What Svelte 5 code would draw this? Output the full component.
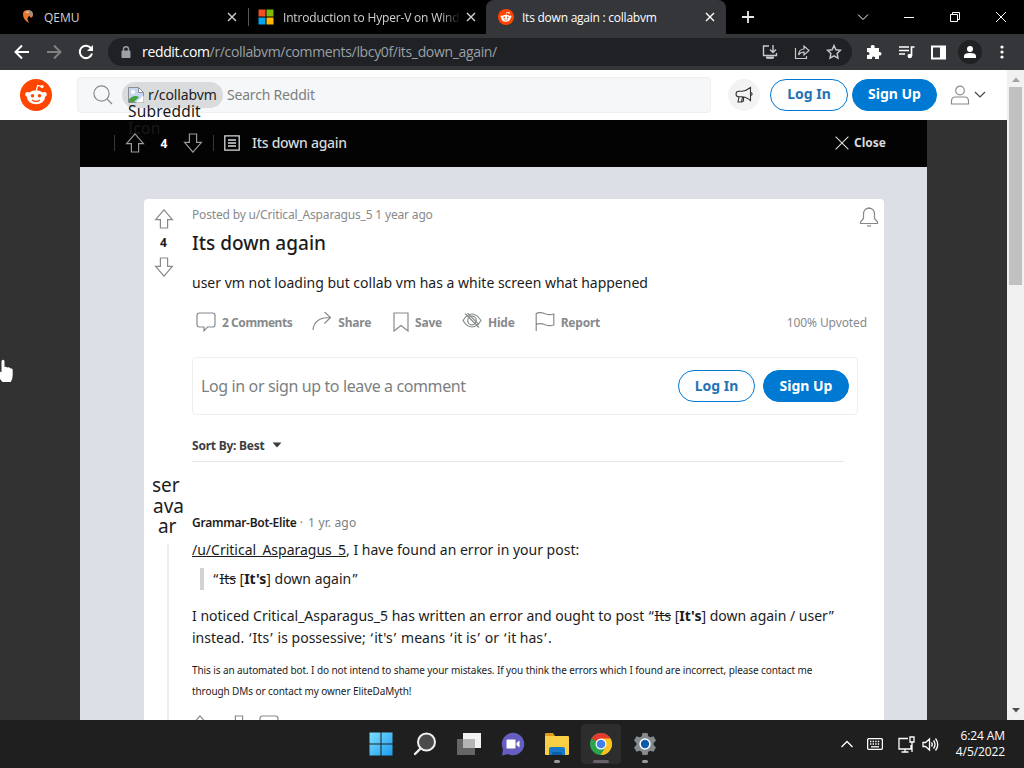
<script>

    let tabs = [
        { id: "qemu", title: "QEMU" },
        { id: "ms", title: "Introduction to Hyper-V on Wind" },
        { id: "reddit", title: "Its down again : collabvm" }
    ];

    let active =
        $state("reddit");

    let actions = [
        { icon: "talk", label: "2 Comments" },
        { icon: "share", label: "Share" },
        { icon: "save", label: "Save" },
        { icon: "hide", label: "Hide" },
        { icon: "report", label: "Report" }
    ];

</script>

{#snippet snoo(size)}
    <svg width={size} height={size} viewBox="0 0 32 32">
        <circle cx="16" cy="16" r="16" fill="#ff4500" />
        <path d="M16.3 11.5l1.4-5 4.2 1" fill="none" stroke="#fff" stroke-width="1.2" />
        <circle cx="22" cy="7.6" r="1.7" fill="#fff" />
        <circle cx="7.6" cy="15.4" r="2.4" fill="#fff" />
        <circle cx="24.4" cy="15.4" r="2.4" fill="#fff" />
        <ellipse cx="16" cy="18.3" rx="9" ry="7" fill="#fff" />
        <circle cx="12.5" cy="16.8" r="1.7" fill="#ff4500" />
        <circle cx="19.5" cy="16.8" r="1.7" fill="#ff4500" />
        <path d="M12 21q4 2.8 8 0" fill="none" stroke="#ff4500" stroke-width="1.2" />
    </svg>
{/snippet}

{#snippet up()}
    <svg class="line" width="20" height="20" viewBox="0 0 20 20">
        <path d="M10 .8 18.4 10.6H13.6V19H6.4V10.6H1.6Z" />
    </svg>
{/snippet}

{#snippet down()}
    <svg class="line" width="20" height="20" viewBox="0 0 20 20">
        <path d="M10 19.2 18.4 9.4H13.6V1H6.4V9.4H1.6Z" />
    </svg>
{/snippet}

{#snippet cross(size)}
    <svg width={size} height={size} viewBox="0 0 10 10">
        <path d="M1 1l8 8M9 1l-8 8" fill="none" stroke="currentColor" stroke-width="1.4" />
    </svg>
{/snippet}

<div class="screen">

    <div class="tabs">

        {#each tabs as tab}

            <div
                class="tab {tab.id}"
                class:active={active === tab.id}
            >

                {#if tab.id === "qemu"}
                    <svg width="16" height="16" viewBox="0 0 16 16">
                        <path d="M3 5Q3 1 8 1q5 .5 5 5 0 2-2 3L9.500 7 8 8q-1 2 0 3.500l1 2.500Q3 11 3 5Z" fill="#e87830" />
                        <path d="M8 1q5 .5 5 5l-1.500 1.500-2.500-2Z" fill="#9b9283" />
                        <path d="M5 4l3-2 1 1.500Z" fill="#ffe0c0" />
                    </svg>
                {:else if tab.id === "ms"}
                    <svg width="16" height="16" viewBox="0 0 16 16">
                        <path d="M.5.5h7v7h-7z" fill="#f25022" />
                        <path d="M8.500.5h7v7h-7z" fill="#7fba00" />
                        <path d="M.5 8.500h7v7h-7z" fill="#00a4ef" />
                        <path d="M8.500 8.500h7v7h-7z" fill="#ffb900" />
                    </svg>
                {:else}
                    {@render snoo(16)}
                {/if}

                <span class="tab-title">{tab.title}</span>

                {@render cross(10)}

            </div>

        {/each}

        <svg class="plus" width="14" height="14" viewBox="0 0 14 14">
            <path d="M7 1v12M1 7h12" fill="none" stroke="#e8e8e8" stroke-width="1.8" />
        </svg>

        <div class="win">
            <svg width="12" height="12" viewBox="0 0 12 12"><path d="M1 3.500l5 5 5-5" /></svg>
            <svg width="12" height="12" viewBox="0 0 12 12"><path d="M1 6.500h10" /></svg>
            <svg width="12" height="12" viewBox="0 0 12 12"><path d="M1.500 3.500h7v7h-7zM3.500 3.500v-2h7v7h-2" /></svg>
            <svg width="12" height="12" viewBox="0 0 12 12"><path d="M1 1l10 10M11 1L1 11" /></svg>
        </div>

    </div>

    <div class="toolbar">

        <svg class="nav" width="16" height="16" viewBox="0 0 16 16"><path d="M15 8H2M8 1.500L1.500 8 8 14.500" /></svg>
        <svg class="nav dim" width="16" height="16" viewBox="0 0 16 16"><path d="M1 8h13M8 1.500L14.500 8 8 14.500" /></svg>
        <svg class="nav" width="16" height="16" viewBox="0 0 16 16">
            <path d="M13.200 4.500A6.200 6.200 0 1 0 14 9.500" />
            <path d="M15 1v6H9Z" fill="#fff" stroke="none" />
        </svg>

        <div class="omnibox">

            <svg width="10" height="12" viewBox="0 0 10 12">
                <path d="M1 5h8v6.500H1z" fill="#9aa0a6" stroke="#9aa0a6" />
                <path d="M2.500 5V3q0-2.200 2.500-2.200T7.500 3v2" fill="none" stroke="#9aa0a6" stroke-width="1.400" />
            </svg>

            <div class="url"><b>reddit.com</b>/r/collabvm/comments/lbcy0f/its_down_again/</div>

            <svg class="tool" width="16" height="16" viewBox="0 0 16 16">
                <path d="M7 2H1.500v9.500h13V9M5 14h6M11 1v7M8 5.500l3 3 3-3" />
                <path d="M4 12.500h8v2H4z" fill="#c7c9cc" stroke="none" />
            </svg>
            <svg class="tool" width="16" height="16" viewBox="0 0 16 16">
                <path d="M1.500 4v10.500h11V12M4.500 11q.5-6 5.500-6V2l5 4.500-5 4.500V8q-3.500 0-5.500 3Z" stroke-width="1.200" />
            </svg>
            <svg class="tool" width="16" height="16" viewBox="0 0 16 16">
                <path d="M8 1.500l1.900 4.300 4.600.5-3.400 3.200.9 4.700L8 11.800l-4 2.400.9-4.700L1.500 6.300l4.600-.5Z" />
            </svg>

        </div>

        <svg class="ext" width="16" height="16" viewBox="0 0 16 16">
            <path d="M1 4h4q-1-3 1.700-3T8.500 4H13v4q2.500-.5 2.500 1.700T13 11.500V15H9q.5-2.500-1.500-2.500T6 15H1v-4q2.500.5 2.500-1.500T1 8Z" fill="#fff" />
        </svg>
        <svg class="ext" width="17" height="16" viewBox="0 0 17 16">
            <path d="M1 3h10M1 6.500h10M1 10h6M13.500 12V3h3" fill="none" stroke="#fff" stroke-width="1.700" />
            <circle cx="11.800" cy="12" r="2.300" fill="#fff" />
        </svg>
        <svg class="ext" width="15" height="15" viewBox="0 0 15 15">
            <path d="M1 1.500h13v12H1z" fill="none" stroke="#fff" stroke-width="2" />
            <path d="M9 1h5v13H9z" fill="#fff" />
        </svg>
        <div class="profile">
            <svg width="14" height="14" viewBox="0 0 14 14">
                <circle cx="7" cy="4" r="3" fill="#fff" />
                <path d="M1 13v-2q0-3 6-3t6 3v2Z" fill="#fff" />
            </svg>
        </div>
        <svg class="dots" width="4" height="16" viewBox="0 0 4 16">
            <circle cx="2" cy="3" r="1.600" /><circle cx="2" cy="8" r="1.600" /><circle cx="2" cy="13" r="1.600" />
        </svg>

    </div>

    <div class="view">

        <div class="page">

            <div class="header">

                <div class="logo">{@render snoo(32)}</div>

                <div class="search">

                    <svg width="20" height="20" viewBox="0 0 20 20">
                        <circle cx="8.500" cy="8.500" r="7.600" fill="none" stroke="#878a8c" stroke-width="1.200" />
                        <path d="M14 14l5 5" stroke="#878a8c" stroke-width="1.200" />
                    </svg>

                    <div class="pill">
                        <svg width="16" height="16" viewBox="0 0 16 16">
                            <path d="M.5.5h10l5 5v10H.5z" fill="#c6d8f2" stroke="#8c8f93" />
                            <path d="M10.500.5v5h5z" fill="#fff" stroke="#8c8f93" />
                            <path d="M1 15v-3q5-5 10-2L6 15Z" fill="#44a340" />
                            <path d="M8 15.500l7.500-7v7Z" fill="#fff" />
                            <circle cx="5" cy="5" r="2" fill="#fff" />
                        </svg>
                        <span>r/collabvm</span>
                        <div class="alt">Subreddit<br />Icon</div>
                    </div>

                    <span class="placeholder">Search Reddit</span>

                </div>

                <div class="horn">
                    <svg width="20" height="20" viewBox="0 0 20 20">
                        <path d="M8 6.200Q12 6 16.500 2.500v13Q12 11.800 8 11.800H5Q2 11.800 2 9t3-2.800ZM5 12l-1 5h3.500l1-5M9.500 12.500v3.500l-2 1M16.500 7.500q1.600 0 1.600 1.500t-1.600 1.500" />
                    </svg>
                </div>

                <button class="btn ghost">Log In</button>
                <button class="btn">Sign Up</button>

                <svg class="user" width="20" height="20" viewBox="0 0 20 20">
                    <circle cx="10" cy="5.500" r="4.300" />
                    <path d="M1.500 19v-3q0-4 4-4h9q4 0 4 4v3Z" />
                </svg>
                <svg class="chev" width="12" height="8" viewBox="0 0 12 8"><path d="M1 1l5 5 5-5" /></svg>

            </div>

            <div class="modal">

                <div class="bar">
                    <i></i>
                    {@render up()}
                    <b class="count">4</b>
                    {@render down()}
                    <i class="second"></i>
                    <svg class="doc" width="16" height="16" viewBox="0 0 16 16">
                        <path d="M.8.8h14.400v14.400H.8zM4 5h8M4 8h8M4 11h8" />
                    </svg>
                    <span class="bar-title">Its down again</span>
                    <div class="close">
                        {@render cross(16)}
                        <span>Close</span>
                    </div>
                </div>

                <div class="card">

                    <div class="votes">
                        {@render up()}
                        <b>4</b>
                        {@render down()}
                    </div>

                    <div class="post">

                        <div class="meta">
                            <span>Posted by u/Critical_Asparagus_5 1 year ago</span>
                            <svg class="line bell" width="20" height="20" viewBox="0 0 20 20">
                                <path d="M10 1.200q5.500.4 5.500 6.300v4l3 3.500v1.500h-17V15l3-3.500v-4Q4.500 1.600 10 1.200ZM10 0v1.200M8 18.500q2 1.400 4 0" />
                            </svg>
                        </div>

                        <h1>Its down again</h1>

                        <p class="text">user vm not loading but collab vm has a white screen what happened</p>

                        <div class="actions">

                            {#each actions as a}

                                <div class="action {a.icon}">
                                    <svg class="line" width="20" height="20" viewBox="0 0 20 20">
                                        {#if a.icon === "talk"}
                                            <path d="M3.500 1h13Q19 1 19 3.500v9q0 2.500-2.500 2.500h-5L8 18.800V15H3.500Q1 15 1 12.500v-9Q1 1 3.500 1Z" />
                                        {:else if a.icon === "share"}
                                            <path d="M1 18Q2 5.500 18 5.500M12.500 0l6 5.500-6 6" />
                                        {:else if a.icon === "save"}
                                            <path d="M3 1h14v18l-7-5.500L3 19Z" />
                                        {:else if a.icon === "hide"}
                                            <path d="M1 8.500Q5 2 10 2t9 6.500Q15 15 10 15T1 8.500Z" />
                                            <circle cx="10" cy="8.500" r="4.300" />
                                            <path d="M3 1.500l14 14M5.500 1.200l11.500 11.500" />
                                        {:else}
                                            <path d="M1.200 19V1.500q4-2 9 .3 4 1.700 8.600.2v11q-4.600 1.500-8.600-.2-5-2.300-9-.3" />
                                        {/if}
                                    </svg>
                                    {a.label}
                                </div>

                            {/each}

                            <span class="upvoted">100% Upvoted</span>

                        </div>

                        <div class="join">
                            <span>Log in or sign up to leave a comment</span>
                            <button class="btn ghost">Log In</button>
                            <button class="btn">Sign Up</button>
                        </div>

                        <div class="sort">
                            Sort By: Best
                            <svg width="10" height="6" viewBox="0 0 10 6"><path d="M.5.500h9L5 5.500Z" fill="#3c3d3f" /></svg>
                        </div>

                    </div>

                    <div class="side">
                        <div class="avatar">ser<br />ava<br />&nbsp;ar</div>
                        <div class="thread"></div>
                    </div>

                    <div class="comment">

                        <div class="author"><b>Grammar-Bot-Elite</b> · <span>1 yr. ago</span></div>

                        <p class="hello"><u>/u/Critical_Asparagus_5</u>, I have found an error in your post:</p>

                        <blockquote><i>“</i><s>Its</s> [<b>It's</b>] down again<i>”</i></blockquote>

                        <p class="body">
                            I noticed Critical_Asparagus_5 has written an error and ought to post <i>“</i><s>Its</s> [<b>It's</b>] down again / user<i>”</i><br />
                            <span>instead. <i>‘</i>Its<i>’</i> is possessive; <i>‘</i>it's<i>’</i> means <i>‘</i>it is<i>’</i> or <i>‘</i>it has<i>’</i>.</span>
                        </p>

                        <p class="small">
                            This is an automated bot. I do not intend to shame your mistakes. If you think the errors which I found are incorrect, please contact me<br />
                            <span>through DMs or contact my owner EliteDaMyth!</span>
                        </p>

                        <div class="foot">
                            {@render up()}
                            {@render down()}
                            <svg class="line" width="20" height="20" viewBox="0 0 20 20">
                                <path d="M3.500 1h13Q19 1 19 3.500v9q0 2.500-2.500 2.500h-13Q1 15 1 12.500v-9Q1 1 3.500 1Z" />
                            </svg>
                        </div>

                    </div>

                </div>

            </div>

        </div>

        <div class="scroll">
            <svg width="8" height="5" viewBox="0 0 8 5"><path d="M0 5l4-4.500L8 5Z" fill="#a3a3a3" /></svg>
            <div class="thumb"></div>
            <svg width="8" height="5" viewBox="0 0 8 5"><path d="M0 0l4 4.500L8 0Z" fill="#505050" /></svg>
        </div>

    </div>

    <div class="taskbar">

        <div class="apps">

            <div class="app">
                <svg width="24" height="24" viewBox="0 0 24 24">
                    <defs>
                        <linearGradient id="win" x1="0" y1="0" x2="1" y2="1">
                            <stop offset="0" stop-color="#7fe0ff" />
                            <stop offset="1" stop-color="#1a9bef" />
                        </linearGradient>
                    </defs>
                    <path d="M.5.5h11v11H.5zM12.500.5h11v11h-11zM.5 12.500h11v11H.5zM12.500 12.500h11v11h-11z" fill="url(#win)" />
                </svg>
            </div>

            <div class="app">
                <svg width="24" height="24" viewBox="0 0 24 24">
                    <path d="M8 16l-6 6" stroke="#eee" stroke-width="2.400" stroke-linecap="round" />
                    <circle cx="13.500" cy="10" r="8.500" fill="#4b4b4b" stroke="#f0f0f0" stroke-width="2" />
                </svg>
            </div>

            <div class="app">
                <svg width="26" height="24" viewBox="0 0 26 24">
                    <path d="M7 1h18v15H7z" fill="#f1f1f1" />
                    <path d="M1 7h18v16H1z" fill="#666" />
                    <path d="M7 7h12v9H7z" fill="#b5b5b5" />
                </svg>
            </div>

            <div class="app">
                <svg width="24" height="24" viewBox="0 0 24 24">
                    <path d="M12 .8A11.200 11.200 0 1 1 7 22L1 23.400 2 17A11.200 11.200 0 0 1 12 .8Z" fill="#655dc0" />
                    <rect x="5.500" y="7.500" width="9" height="9" rx="1" fill="#fff" />
                    <path d="M15.500 11l3-2.500v7l-3-2.500Z" fill="#fff" />
                </svg>
            </div>

            <div class="app open">
                <svg width="26" height="24" viewBox="0 0 26 24">
                    <path d="M1 2q0-1 1-1h7l2 3H1Z" fill="#dd9b16" />
                    <path d="M1 4h23q1 0 1 1v17q0 1-1 1H2q-1 0-1-1Z" fill="#fbcf45" />
                    <path d="M5 23v-6q0-2 2-2h12q2 0 2 2v6Z" fill="#1879c9" />
                    <path d="M8 20h10v3H8z" fill="#075fa9" />
                </svg>
            </div>

            <div class="app open current">
                <svg width="24" height="24" viewBox="0 0 24 24">
                    <circle cx="12" cy="12" r="11" fill="#2ba24c" />
                    <path d="M12 12L2.470 6.500A11 11 0 0 1 21.530 6.500Z" fill="#e33b2e" />
                    <path d="M12 6.500h9.530A11 11 0 0 1 11.500 23l5.300-8.200Z" fill="#fcc31e" />
                    <circle cx="12" cy="12" r="5.500" fill="#fff" />
                    <circle cx="12" cy="12" r="4.300" fill="#3f80e8" />
                </svg>
            </div>

            <div class="app open">
                <svg width="24" height="24" viewBox="0 0 24 24">
                    <path d="M9.500 1h5l.8 3.200 2 1.100 3.200-1 2.500 4.200-2.400 2.400v2.200l2.400 2.400-2.500 4.200-3.200-1-2 1.100-.8 3.200h-5l-.8-3.200-2-1.100-3.200 1L1 15.500l2.400-2.400v-2.200L1 8.500l2.500-4.200 3.200 1 2-1.100Z" fill="#858a8e" />
                    <circle cx="12" cy="12" r="5.700" fill="#fff" />
                    <circle cx="12" cy="12" r="4.200" fill="#0e5aa8" />
                </svg>
            </div>

        </div>

        <div class="tray">
            <svg width="14" height="8" viewBox="0 0 14 8"><path d="M1.500 7L7 1.500 12.500 7" /></svg>
            <svg class="keys" width="16" height="12" viewBox="0 0 16 12">
                <rect x=".6" y=".6" width="14.800" height="10.800" rx="1.500" />
                <path d="M3 3.500h10M3 6h10" stroke-dasharray="1.400 1.200" />
                <path d="M4 8.800h8" />
            </svg>
            <svg class="net" width="17" height="17" viewBox="0 0 17 17">
                <path d="M10 2.500H1v10.500h12v-4M7 13v2.500M3.500 16h7M12 1h4v5h-4zM14 6v10" />
            </svg>
            <svg class="vol" width="17" height="15" viewBox="0 0 17 15">
                <path d="M1 5.500h2.500L7.500 2v11L3.500 9.500H1ZM9.500 5.500q1.500 2 0 4M11.500 3.500q3 4 0 8M13.500 1.500q4.500 6 0 12" />
            </svg>
            <div class="clock">6:24 AM<br />4/5/2022</div>
        </div>

    </div>

    <svg class="pointer" width="18" height="25" viewBox="0 0 18 25">
        <path d="M1.500 3Q3 .5 4.500 3V9q1.800-.8 2.800.6 2-.8 2.900.8 2.200-.5 2.500 1.600V17q0 4-2 7H2.500L0 21V13.500l1.500.8Z" fill="#fff" />
    </svg>

</div>

<style>

:global(body){

    margin:0;
    overflow:hidden;

}

.screen{

    position:relative;
    width:1024px;
    height:768px;
    display:flex;
    flex-direction:column;
    overflow:hidden;
    background:#000;
    font-family:"Noto Sans", sans-serif;
    color:#1c1c1c;

}

svg{

    display:block;
    flex:none;

}

p,
h1,
blockquote{

    margin:0;

}

.line{

    fill:none;
    stroke:#878a8c;
    stroke-width:1.2;

}

/* browser tabs */

.tabs{

    height:34px;
    display:flex;
    align-items:center;
    background:#000;
    font-family:"Open Sans", sans-serif;
    font-size:12px;

}

.tab{

    height:34px;
    box-sizing:border-box;
    display:flex;
    align-items:center;
    gap:8px;
    color:#d0d2d4;

}

.tab.qemu{

    width:248px;
    padding:0 11px 0 20px;

}

.tab.ms{

    width:238px;
    padding:0 10px 0 10px;
    background:linear-gradient(#555, #555) left center / 1px 18px no-repeat;

}

.tab.active{

    width:240px;
    padding:0 11px 0 12px;
    background:#35363a;
    border-radius:8px 8px 0 0;
    color:#fff;

}

.tab-title{

    flex:1;
    white-space:nowrap;
    letter-spacing:-.24px;

}

.qemu .tab-title{

    letter-spacing:0;

}

.ms .tab-title{

    letter-spacing:-.17px;
    margin:0 -8px 0 1px;
    mask-image:linear-gradient(90deg, #000 86%, transparent 97%);

}

.plus{

    margin-left:15px;

}

.win{

    margin-left:auto;
    height:28px;
    padding-right:17px;
    display:flex;
    align-items:center;
    gap:34px;
    fill:none;
    stroke:#fff;

}

/* toolbar */

.toolbar{

    height:36px;
    display:flex;
    align-items:center;
    background:#35363a;
    padding-left:14px;

}

.nav{

    margin-right:16px;
    fill:none;
    stroke:#fff;
    stroke-width:2;

}

.nav.dim{

    stroke:#7f8183;

}

.omnibox{

    width:744px;
    height:28px;
    box-sizing:border-box;
    margin-left:-2px;
    padding:0 10px 0 13px;
    display:flex;
    align-items:center;
    border-radius:14px;
    background:#202124;

}

.url{

    flex:1;
    margin-left:11px;
    font-family:"Open Sans", sans-serif;
    font-size:14px;
    line-height:20px;
    letter-spacing:-.34px;
    color:#9aa0a6;

}

.url b{

    font-weight:400;
    color:#fff;

}

.tool{

    margin-left:16px;
    fill:none;
    stroke:#c7c9cc;
    stroke-width:1.4;

}

.ext{

    margin-left:16px;

}

.omnibox + .ext{

    margin-left:14px;

}

.profile{

    width:24px;
    height:24px;
    margin-left:12px;
    display:grid;
    place-items:center;
    border-radius:50%;
    background:#202124;

}

.dots{

    margin-left:18px;
    fill:#fff;

}

/* viewport */

.view{

    height:650px;
    display:flex;

}

.page{

    width:1007px;
    display:flex;
    flex-direction:column;
    background:#323232;
    overflow:hidden;

}

.scroll{

    width:17px;
    display:flex;
    flex-direction:column;
    align-items:center;
    background:#f1f1f1;
    padding:7px 0;
    box-sizing:border-box;

}

.thumb{

    width:13px;
    height:198px;
    margin:5px 0 auto;
    background:#c1c1c1;

}

.header{

    position:relative;
    z-index:1;
    height:50px;
    box-sizing:border-box;
    padding-left:20px;
    display:flex;
    align-items:center;
    background:#fff;

}

.search{

    width:634px;
    height:36px;
    box-sizing:border-box;
    margin:0 17px 0 25px;
    padding-left:15px;
    display:flex;
    align-items:center;
    border:1px solid #edeff1;
    border-radius:4px;
    background:#f6f7f8;
    font-size:14px;

}

.pill{

    position:relative;
    width:101px;
    height:26px;
    box-sizing:border-box;
    margin:0 4px 0 9px;
    padding-left:6px;
    display:flex;
    align-items:center;
    gap:4px;
    border-radius:13px;
    background:#dadbdc;

}

.pill span{

    margin-top:-2px;
    letter-spacing:-.1px;

}

.alt{

    position:absolute;
    left:6px;
    top:21px;
    font-size:15.500px;
    line-height:17px;
    letter-spacing:.2px;
    color:#191919;

}

.placeholder{

    margin-top:-1px;
    letter-spacing:-.2px;
    color:#7c7f81;

}

.horn{

    width:32px;
    height:32px;
    margin-right:10px;
    display:grid;
    place-items:center;
    border-radius:50%;
    background:#f3f3f3;

}

.horn svg{

    fill:none;
    stroke:#333;
    stroke-width:1.1;

}

.btn{

    width:85px;
    height:32px;
    box-sizing:border-box;
    padding:0;
    border:1px solid #0079d3;
    border-radius:16px;
    background:#0079d3;
    color:#fff;
    font:700 14px/20px "Noto Sans", sans-serif;

}

.btn.ghost{

    width:78px;
    margin-right:4px;
    background:#fff;
    color:#2473b5;

}

.header .btn{

    padding-bottom:2px;

}

.user{

    margin:0 4px 0 13px;
    fill:none;
    stroke:#878a8c;
    stroke-width:1.2;

}

.chev{

    fill:none;
    stroke:#444;
    stroke-width:1.2;

}

.modal{

    width:847px;
    height:600px;
    margin-left:80px;
    background:#dce0e6;

}

.bar{

    height:47px;
    box-sizing:border-box;
    padding:0 41px 1px 34px;
    display:flex;
    align-items:center;
    background:#030303;
    color:#d7dadc;

}

.bar i{

    width:1px;
    height:16px;
    margin-right:10px;
    background:#343536;

}

.bar .line{

    stroke:#999;

}

.count{

    width:38px;
    text-align:center;
    font-size:12px;
    color:#fff;

}

.bar .second{

    margin:0 10px;

}

.doc{

    fill:none;
    stroke:#d7dadc;
    stroke-width:1.3;

}

.bar-title{

    margin:-2px 0 0 12px;
    font-size:14px;
    font-weight:500;
    letter-spacing:-.28px;

}

.close{

    margin-left:auto;
    display:flex;
    align-items:center;
    gap:4px;
    font-size:12px;
    font-weight:700;

}

.close span{

    margin-top:-2px;

}

.close :global(path){

    stroke-width:.7;

}

/* post */

.card{

    width:740px;
    height:521px;
    margin:32px 0 0 64px;
    display:grid;
    grid-template-columns:48px 692px;
    grid-template-rows:263px 1fr;
    border-radius:4px 4px 0 0;
    background:#fff;
    overflow:hidden;

}

.votes{

    width:39px;
    padding-top:10px;
    display:flex;
    flex-direction:column;
    align-items:center;
    font-size:12px;
    line-height:28px;

}

.post{

    padding-top:8px;

}

.meta{

    height:16px;
    display:flex;
    justify-content:space-between;
    align-items:center;
    padding-right:5px;
    font-size:12px;
    letter-spacing:-.17px;
    color:#878a8c;

}

.meta span{

    margin-top:-1px;

}

.bell{

    margin-top:4px;

}

h1{

    margin-top:8px;
    font-size:19px;
    line-height:24px;
    font-weight:500;

}

.text{

    margin-top:17px;
    font-size:14px;
    line-height:22px;

}

.actions{

    height:34px;
    margin-top:11px;
    padding:0 17px 0 4px;
    display:flex;
    align-items:center;
    font-size:12px;
    font-weight:700;
    letter-spacing:-.22px;
    color:#878a8c;

}

.action{

    display:flex;
    align-items:center;
    gap:6px;
    margin-right:20px;

}

.talk{

    letter-spacing:-.45px;

}

.save{

    gap:4px;

}

.upvoted{

    margin-left:auto;
    font-weight:400;
    letter-spacing:-.1px;

}

.join{

    width:666px;
    height:58px;
    box-sizing:border-box;
    margin-top:18px;
    padding:0 8px;
    display:flex;
    align-items:center;
    border:1px solid #edeff1;
    border-radius:4px;
    font-size:16px;
    letter-spacing:-.38px;
    color:#7c7f81;

}

.join span{

    flex:1;

}

.join .btn.ghost{

    width:77px;
    margin-right:8px;

}

.join .btn{

    width:86px;

}

.sort{

    width:652px;
    height:47px;
    display:flex;
    align-items:center;
    gap:7px;
    padding-top:14px;
    box-sizing:border-box;
    border-bottom:1px solid #e4e6e8;
    font-size:12px;
    font-weight:700;
    letter-spacing:-.23px;
    color:#3c3d3f;

}

/* comment */

.side{

    padding:13px 0 0 9px;

}

.avatar{

    width:30px;
    height:69px;
    font-size:19px;
    line-height:20.500px;
    text-indent:-1px;
    overflow:hidden;

}

.thread{

    width:2px;
    height:180px;
    margin-left:14px;
    background:#edeff1;

}

.comment{

    padding-top:52px;
    font-size:14px;

}

.comment i{

    font-style:normal;

}

/* curly quotes sit a little wider than the text around them */

blockquote i,
.body > i{

    padding:0 .8px;

}

blockquote i{

    padding:0 1.200px;

}

.body span i{

    padding:0 1.200px;

}

.author{

    font-size:12px;
    line-height:18px;
    color:#7c7f81;

}

.author b{

    font-weight:600;
    letter-spacing:-.27px;
    color:#1c1c1c;

}

.author span{

    margin-left:2px;
    letter-spacing:.15px;

}

.hello{

    margin-top:7px;
    line-height:22px;

}

blockquote{

    margin:7px 0 0 8px;
    padding-left:8px;
    border-left:4px solid #d0d2d4;
    line-height:22px;

}

.body{

    margin-top:15px;
    line-height:22px;

}

.small{

    margin-top:11px;
    font-size:10px;
    line-height:21px;
    letter-spacing:-.095px;

}

.foot{

    margin:13px 0 0 -2px;
    display:flex;
    gap:19px;

}

.foot :global(svg:last-child){

    margin-left:-9px;

}

/* taskbar */

.taskbar{

    position:relative;
    height:48px;
    display:flex;
    align-items:center;
    justify-content:flex-end;
    background:#1f1f1f;
    color:#fff;

}

.apps{

    position:absolute;
    left:360.500px;
    display:flex;
    gap:4px;

}

.app{

    position:relative;
    width:40px;
    height:40px;
    display:grid;
    place-items:center;
    border-radius:4px;

}

.current{

    background:#2d2d2d;

}

.open::after{

    content:"";
    position:absolute;
    left:17px;
    bottom:1px;
    width:6px;
    height:3px;
    border-radius:2px;
    background:#9a9a9a;

}

.current::after{

    left:12px;
    width:16px;
    background:#66616a;

}

.tray{

    display:flex;
    align-items:center;
    padding-right:19px;
    fill:none;
    stroke:#fff;
    stroke-width:1.3;

}

.keys{

    margin-left:13px;

}

.net{

    margin-left:15px;

}

.vol{

    margin-left:7px;

}

.clock{

    width:66px;
    text-align:right;
    font-family:"Open Sans", sans-serif;
    font-size:12px;
    line-height:16px;
    letter-spacing:-.1px;

}

.pointer{

    position:absolute;
    left:0;
    top:358px;

}

</style>
